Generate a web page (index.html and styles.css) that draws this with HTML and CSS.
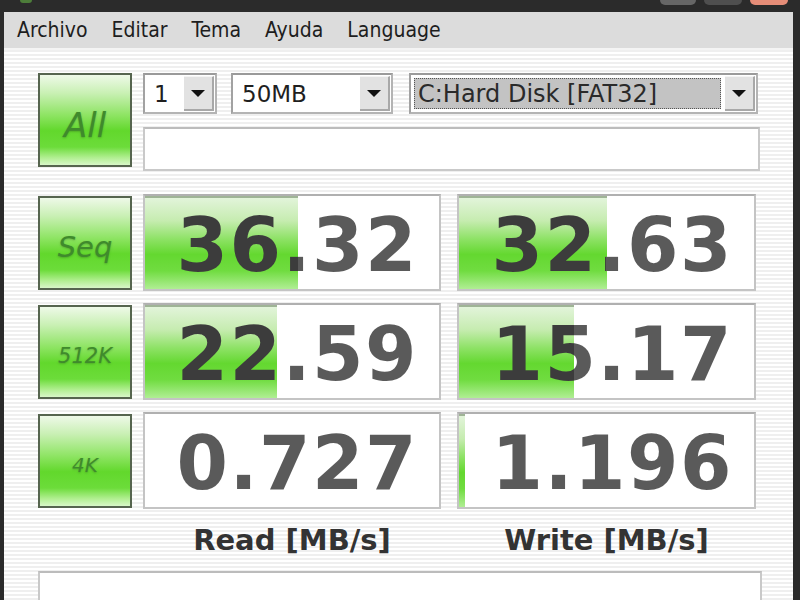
FILE: index.html
```html
<!DOCTYPE html>
<html lang="es">
<head>
  <meta charset="UTF-8" />
  <title>CrystalDiskMark</title>
  <link rel="stylesheet" href="styles.css">
</head>
<body>
  <div class="titlebar">
    <span class="app-icon"></span>
    <div class="win-buttons">
      <span class="win-btn min"></span>
      <span class="win-btn max"></span>
      <span class="win-btn close"></span>
    </div>
  </div>

  <div class="window">
    <nav class="menubar">
      <span>Archivo</span>
      <span>Editar</span>
      <span>Tema</span>
      <span>Ayuda</span>
      <span>Language</span>
    </nav>

    <main class="panel">
      <div class="top">
        <button class="label all">All</button>
        <div class="controls">
          <div class="selects">
            <div class="combo count"><span class="combo-text">1</span><span class="drop"></span></div>
            <div class="combo size"><span class="combo-text">50MB</span><span class="drop"></span></div>
            <div class="combo drive"><span class="combo-text selected">C:Hard Disk [FAT32]</span><span class="drop"></span></div>
          </div>
          <div class="comment"></div>
        </div>
      </div>

      <div class="results">
        <div class="row">
          <button class="label seq">Seq</button>
          <div class="meter read" style="--fill: 52%"><span class="value">36.32</span></div>
          <div class="meter write" style="--fill: 50%"><span class="value">32.63</span></div>
        </div>
        <div class="row">
          <button class="label k512">512K</button>
          <div class="meter read" style="--fill: 45%"><span class="value">22.59</span></div>
          <div class="meter write" style="--fill: 39%"><span class="value">15.17</span></div>
        </div>
        <div class="row">
          <button class="label k4">4K</button>
          <div class="meter read" style="--fill: 0%"><span class="value">0.727</span></div>
          <div class="meter write" style="--fill: 2%"><span class="value">1.196</span></div>
        </div>
      </div>

      <div class="units">
        <span class="unit read">Read [MB/s]</span>
        <span class="unit write">Write [MB/s]</span>
      </div>

      <div class="comment bottom"></div>
    </main>
  </div>
</body>
</html>
```

FILE: styles.css
```css
html, body {
  margin: 0;
  padding: 0;
  height: 600px;
  overflow: hidden;
  background-color: #2b2b2b;
  font-family: 'DejaVu Sans', sans-serif;
}

.titlebar {
  height: 12px;
  display: flex;
  align-items: flex-start;
  padding: 0 12px 0 20px;
}

.app-icon {
  width: 12px;
  height: 3px;
  border-radius: 0 0 6px 6px;
  background-color: #4d7d3a;
}

.win-buttons {
  margin-left: auto;
  display: flex;
  gap: 8px;
}

.win-btn {
  height: 5px;
  width: 36px;
  border-radius: 0 0 5px 5px;
  background-color: #666;
}

.win-btn.max {
  width: 38px;
  background-color: #4f4f4f;
}

.win-btn.close {
  width: 38px;
  background-color: #e58d78;
}

.window {
  margin: 0 7px 0 4px;
  height: 588px;
  background: repeating-linear-gradient(to bottom, #ffffff 0, #ffffff 2px, #efefef 2px, #efefef 4px);
}

.menubar {
  height: 36px;
  background-color: #dcdcdc;
  display: flex;
  align-items: center;
  gap: 24px;
  padding-left: 13px;
  font-family: 'DejaVu Sans Condensed', 'DejaVu Sans', sans-serif;
  font-stretch: condensed;
  font-size: 21px;
  color: #1e1e1e;
  border-bottom: 2px solid #f4f4f4;
}

.panel {
  padding: 23px 0 0 34px;
}

.top {
  display: flex;
  align-items: flex-start;
}

/* green test buttons */
.label {
  width: 94px;
  height: 94px;
  flex: none;
  border: 2px solid #56654f;
  background: linear-gradient(to bottom, #eef9e8 0%, #c9f0b4 20%, #8de462 45%, #62d82c 62%, #6cdc3a 80%, #b2ef92 92%, #d8f7c8 100%);
  color: #3f8a2c;
  font-family: 'DejaVu Sans', sans-serif;
  font-style: italic;
  text-shadow: 0 1px 2px rgba(40, 90, 30, 0.35);
  padding: 9px 0 0;
  cursor: pointer;
}

.label.all {
  font-size: 34px;
}

.label.seq {
  font-size: 29px;
}

.label.k512 {
  font-size: 21px;
}

.label.k4 {
  font-size: 20px;
}

.controls {
  margin-left: 11px;
  width: 617px;
}

.selects {
  display: flex;
  height: 41px;
}

.combo {
  display: flex;
  align-items: stretch;
  box-sizing: border-box;
  border: 2px solid #b4b4b4;
  border-top-color: #9a9a9a;
  border-left-color: #a2a2a2;
  background-color: #fff;
  font-size: 23px;
  color: #1f1f1f;
}

.combo.count {
  width: 74px;
}

.combo.size {
  width: 162px;
  margin-left: 14px;
}

.combo.drive {
  width: 349px;
  margin-left: 16px;
  font-size: 24px;
}

.combo-text {
  flex: 1;
  display: flex;
  align-items: center;
  padding-left: 9px;
  white-space: nowrap;
}

.combo-text.selected {
  margin: 3px 4px 3px 3px;
  padding-left: 3px;
  background-color: #c3c3c3;
  border: 1px dotted #555;
  color: #2a2a2a;
}

.drop {
  width: 28px;
  flex: none;
  margin: 1px 1px 1px 0;
  background-color: #e2e2e2;
  border-right: 2px solid #a8a8a8;
  border-bottom: 2px solid #a8a8a8;
  border-top: 1px solid #f4f4f4;
  display: flex;
  align-items: center;
  justify-content: center;
}

.drop::after {
  content: '';
  border-left: 7px solid transparent;
  border-right: 7px solid transparent;
  border-top: 7px solid #111;
}

.comment {
  margin-top: 13px;
  height: 44px;
  box-sizing: border-box;
  background-color: #fff;
  border: 2px solid #c9c9c9;
  border-top-color: #bcbcbc;
}

.results {
  margin-top: 23px;
  display: flex;
  flex-direction: column;
  gap: 12px;
}

.row {
  display: flex;
  align-items: center;
  height: 97px;
}

.meter {
  position: relative;
  height: 97px;
  box-sizing: border-box;
  border: 2px solid #c4c4c4;
  border-top-color: #b0b0b0;
  background-color: #fff;
  display: flex;
  align-items: center;
  overflow: hidden;
}

.meter::before {
  content: '';
  position: absolute;
  left: 0;
  top: 0;
  bottom: 0;
  width: var(--fill);
  background: linear-gradient(to bottom, #e2f4da 0%, #c6ecb0 25%, #8ee266 45%, #64d830 62%, #70dc40 80%, #b0ee94 100%);
  border-top: 2px solid #9fb496;
  box-sizing: border-box;
}

.meter.read {
  margin-left: 11px;
  width: 298px;
}

.meter.write {
  margin-left: 16px;
  width: 299px;
}

/* digits are darker where the bar lies under them */
.value {
  position: relative;
  flex: 1;
  box-sizing: border-box;
  text-align: right;
  padding: 5px 21px 0 0;
  font-weight: bold;
  font-size: 74px;
  letter-spacing: 1.5px;
  line-height: 1;
  background: linear-gradient(to right, #3c3c3c var(--fill), #5a5a5a var(--fill));
  -webkit-background-clip: text;
  background-clip: text;
  color: transparent;
}

.units {
  display: flex;
  margin-top: 14px;
  padding-left: 105px;
  font-weight: bold;
  font-size: 29px;
  color: #333;
}

.unit {
  text-align: center;
}

.unit.read {
  width: 298px;
}

.unit.write {
  width: 299px;
  margin-left: 16px;
}

.comment.bottom {
  margin-top: 14px;
  width: 724px;
  height: 34px;
  border-bottom: none;
}
```
